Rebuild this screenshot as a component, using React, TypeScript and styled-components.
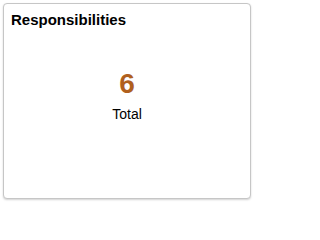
import React from "react";
import styled, { createGlobalStyle } from "styled-components";

const Global = createGlobalStyle`
  html, body { margin: 0; padding: 0; background: #ffffff; }
  body { font-family: Arial, "Liberation Sans", Helvetica, sans-serif; }
`;

const Page = styled.div`
  padding: 3px;
  width: 254px;
  height: 202px;
  box-sizing: border-box;
`;

const Card = styled.section`
  box-sizing: border-box;
  width: 248px;
  height: 196px;
  border: 1px solid #c6c6c6;
  border-radius: 4px;
  box-shadow: 0 1px 2px rgba(0, 0, 0, 0.18);
  background: #ffffff;
  display: flex;
  flex-direction: column;
`;

const Title = styled.h2`
  margin: 0;
  padding: 7px 0 0 7px;
  font-size: 15px;
  font-weight: bold;
  color: #000000;
  line-height: 18px;
`;

const Body = styled.div`
  display: flex;
  flex-direction: column;
  align-items: center;
  padding-top: 39px;
`;

const Count = styled.div`
  font-size: 28px;
  font-weight: bold;
  color: #b0601e;
  line-height: 32px;
`;

const Label = styled.div`
  margin-top: 6px;
  font-size: 14px;
  color: #000000;
  line-height: 17px;
`;

export default function App() {
  return (
    <>
      <Global />
      <Page>
        <Card>
          <Title>Responsibilities</Title>
          <Body>
            <Count>6</Count>
            <Label>Total</Label>
          </Body>
        </Card>
      </Page>
    </>
  );
}
